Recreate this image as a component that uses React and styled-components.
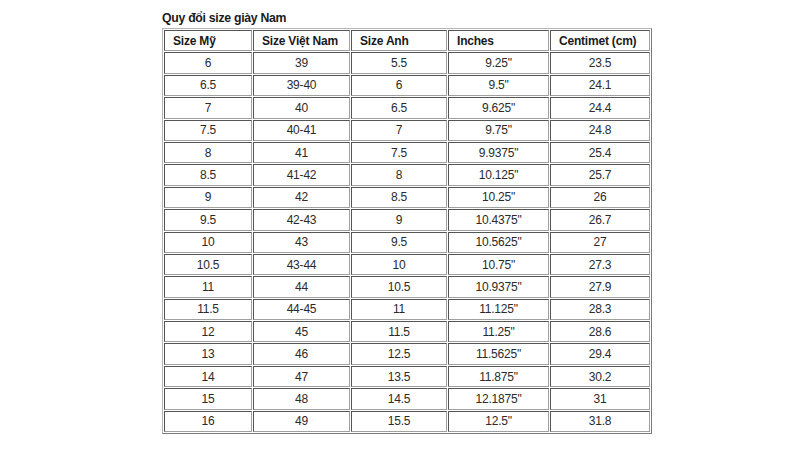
import React from "react";
import styled, { createGlobalStyle } from "styled-components";

const Global = createGlobalStyle`
  html, body { margin: 0; padding: 0; background: #fff; }
  body { font-family: "Liberation Sans", Arial, sans-serif; color: #222; }
`;

const Page = styled.div`
  width: 800px;
  height: 450px;
  box-sizing: border-box;
  padding: 11px 0 0 162px;
  background: #fff;
`;

const Title = styled.div`
  font-size: 12.3px;
  line-height: 14px;
  font-weight: bold;
  letter-spacing: -0.3px;
  color: #1a1a1a;
  margin-bottom: 3px;
`;

const Table = styled.table`
  border-collapse: separate;
  border-spacing: 1px;
  border-style: solid;
  border-width: 1px;
  border-color: #b5b5b5 #7a7a7a #7a7a7a #b5b5b5;
  font-size: 12px;
  letter-spacing: -0.2px;
  table-layout: fixed;
`;

const Row = styled.tr`
  height: 21.4px;
`;

const Cell = styled.td`
  box-sizing: border-box;
  width: ${(p) => p.$w}px;
  height: 21.4px;
  padding: 0 ${(p) => (p.$head ? "8px" : "2px")};
  border-style: solid;
  border-width: 1px;
  border-color: #555 #a0a0a0 #a0a0a0 #555;
  text-align: ${(p) => (p.$head ? "left" : "center")};
  font-weight: ${(p) => (p.$head ? "bold" : "normal")};
  vertical-align: middle;
  white-space: nowrap;
  color: ${(p) => (p.$head ? "#1a1a1a" : "#2a2a2a")};
  line-height: 14px;
`;

const widths = [88, 97, 96, 101, 100];
const headers = ["Size Mỹ", "Size Việt Nam", "Size Anh", "Inches", "Centimet (cm)"];
const rows = [
  ["6", "39", "5.5", '9.25"', "23.5"],
  ["6.5", "39-40", "6", '9.5"', "24.1"],
  ["7", "40", "6.5", '9.625"', "24.4"],
  ["7.5", "40-41", "7", '9.75"', "24.8"],
  ["8", "41", "7.5", '9.9375"', "25.4"],
  ["8.5", "41-42", "8", '10.125"', "25.7"],
  ["9", "42", "8.5", '10.25"', "26"],
  ["9.5", "42-43", "9", '10.4375"', "26.7"],
  ["10", "43", "9.5", '10.5625"', "27"],
  ["10.5", "43-44", "10", '10.75"', "27.3"],
  ["11", "44", "10.5", '10.9375"', "27.9"],
  ["11.5", "44-45", "11", '11.125"', "28.3"],
  ["12", "45", "11.5", '11.25"', "28.6"],
  ["13", "46", "12.5", '11.5625"', "29.4"],
  ["14", "47", "13.5", '11.875"', "30.2"],
  ["15", "48", "14.5", '12.1875"', "31"],
  ["16", "49", "15.5", '12.5"', "31.8"],
];

export default function App() {
  return (
    <>
      <Global />
      <Page>
        <Title>Quy đổi size giày Nam</Title>
        <Table>
          <tbody>
            <Row>
              {headers.map((h, i) => (
                <Cell key={h} $head $w={widths[i]}>
                  {h}
                </Cell>
              ))}
            </Row>
            {rows.map((r, ri) => (
              <Row key={ri}>
                {r.map((c, ci) => (
                  <Cell key={ci} $w={widths[ci]}>
                    {c}
                  </Cell>
                ))}
              </Row>
            ))}
          </tbody>
        </Table>
      </Page>
    </>
  );
}
